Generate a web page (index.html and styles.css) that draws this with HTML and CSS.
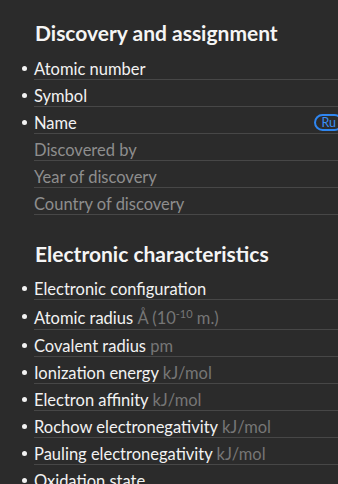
FILE: index.html
```html
<!DOCTYPE html>
<html>
<head>
<meta charset="utf-8">
<link rel="stylesheet" href="styles.css">
</head>
<body>
<div class="page">
  <section class="section first">
    <h2 class="heading">Discovery and assignment</h2>
    <ul class="list">
      <li class="row"><span class="bullet"></span><div class="cell">Atomic number</div></li>
      <li class="row"><span class="bullet"></span><div class="cell">Symbol</div></li>
      <li class="row"><span class="bullet"></span><div class="cell">Name<span class="badge">Ru</span></div></li>
      <li class="row muted"><span class="nobullet"></span><div class="cell">Discovered by</div></li>
      <li class="row muted"><span class="nobullet"></span><div class="cell">Year of discovery</div></li>
      <li class="row muted"><span class="nobullet"></span><div class="cell">Country of discovery</div></li>
    </ul>
  </section>
  <section class="section">
    <h2 class="heading">Electronic characteristics</h2>
    <ul class="list">
      <li class="row"><span class="bullet"></span><div class="cell">Electronic configuration</div></li>
      <li class="row tall"><span class="bullet"></span><div class="cell">Atomic radius <span class="unit">Å (10<sup class="sup">-10</sup> m.)</span></div></li>
      <li class="row"><span class="bullet"></span><div class="cell">Covalent radius <span class="unit">pm</span></div></li>
      <li class="row"><span class="bullet"></span><div class="cell">Ionization energy <span class="unit">kJ/mol</span></div></li>
      <li class="row"><span class="bullet"></span><div class="cell">Electron affinity <span class="unit">kJ/mol</span></div></li>
      <li class="row"><span class="bullet"></span><div class="cell">Rochow electronegativity <span class="unit">kJ/mol</span></div></li>
      <li class="row"><span class="bullet"></span><div class="cell">Pauling electronegativity <span class="unit">kJ/mol</span></div></li>
      <li class="row"><span class="bullet"></span><div class="cell">Oxidation state</div></li>
    </ul>
  </section>
</div>
</body>
</html>
```
FILE: styles.css
```css
html, body {
  margin: 0;
  padding: 0;
  background: #2b2b2b;
  overflow: hidden;
}
body {
  font-family: Lato, "Noto Sans", sans-serif;
  color: #f2f2f2;
}
.page {
  width: 350px;
  padding-top: 19px;
}
.section + .section {
  margin-top: 25px;
}
.heading {
  margin: 0 0 6px 35px;
  font-size: 21px;
  line-height: 28px;
  font-weight: 700;
  color: #f5f5f5;
}
.section + .section .heading {
  margin-bottom: 5px;
}
.list {
  list-style: none;
  margin: 0;
  padding: 0;
}
.row {
  display: flex;
  font-size: 16.5px;
  line-height: 20px;
}
.bullet, .nobullet {
  width: 34px;
  flex: none;
  position: relative;
}
.bullet::before {
  content: "";
  position: absolute;
  left: 22px;
  top: 13px;
  width: 5px;
  height: 5px;
  border-radius: 50%;
  background: #f2f2f2;
}
.cell {
  flex: 1;
  display: flex;
  align-items: baseline;
  padding-top: 6px;
  border-bottom: 1px solid #474747;
  white-space: pre;
}
.row.tall .cell {
  padding-top: 8px;
  padding-bottom: 1px;
}
.row.tall .bullet::before {
  top: 14px;
}
.muted .cell {
  color: #8e8e8e;
}
.unit {
  color: #767676;
}
.sup {
  font-size: 11px;
  line-height: 0;
  vertical-align: 6px;
}
.badge {
  margin-left: auto;
  align-self: center;
  margin-top: -1px;
  box-sizing: border-box;
  height: 17px;
  padding: 0 5px;
  border: 2px solid #2f86f0;
  border-radius: 9px;
  color: #3a8ef5;
  font-size: 12.5px;
  line-height: 13px;
  margin-right: 7px;
}
```
